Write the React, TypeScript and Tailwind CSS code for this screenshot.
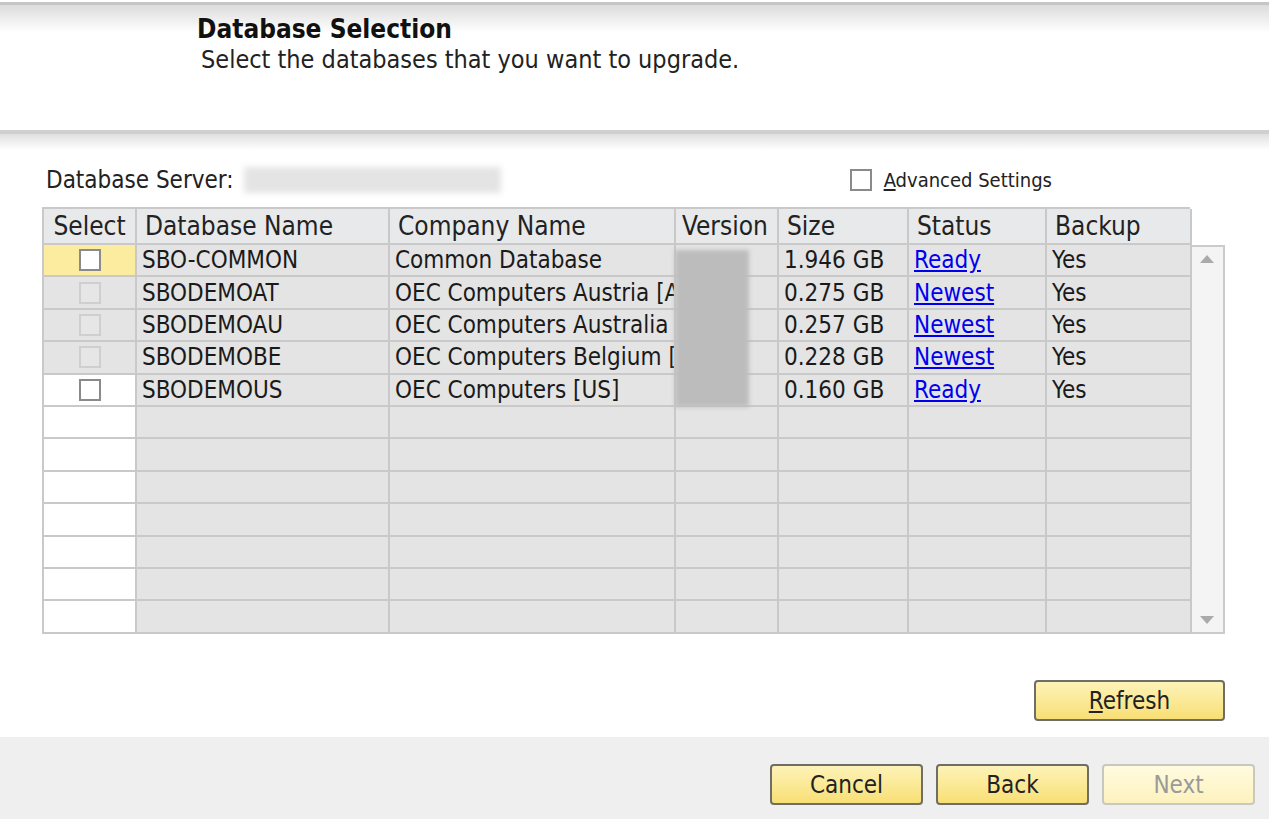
import React from 'react'

type Row = {
  name: string
  company: string
  size: string
  status: 'Ready' | 'Newest'
  backup: string
  selectBg: string
  disabled: boolean
}

const rows: Row[] = [
  { name: 'SBO-COMMON', company: 'Common Database', size: '1.946 GB', status: 'Ready', backup: 'Yes', selectBg: 'bg-[#fcec9f]', disabled: false },
  { name: 'SBODEMOAT', company: 'OEC Computers Austria [A', size: '0.275 GB', status: 'Newest', backup: 'Yes', selectBg: 'bg-[#e4e4e4]', disabled: true },
  { name: 'SBODEMOAU', company: 'OEC Computers Australia', size: '0.257 GB', status: 'Newest', backup: 'Yes', selectBg: 'bg-[#e4e4e4]', disabled: true },
  { name: 'SBODEMOBE', company: 'OEC Computers Belgium [', size: '0.228 GB', status: 'Newest', backup: 'Yes', selectBg: 'bg-[#e4e4e4]', disabled: true },
  { name: 'SBODEMOUS', company: 'OEC Computers [US]', size: '0.160 GB', status: 'Ready', backup: 'Yes', selectBg: 'bg-white', disabled: false },
]

const cols = 'grid grid-cols-[93px_253px_286px_103px_130px_138px_145px]'
const cell = 'border-r-2 border-b-2 border-[#c9c9c9] overflow-hidden whitespace-nowrap px-[5px] flex items-center'

const Check = ({ disabled }: { disabled?: boolean }) => (
  <div
    className={`w-[22px] h-[22px] border-2 ${disabled ? 'border-[#cfcfcf] bg-[#e6e6e6]' : 'border-[#8a8a8a] bg-white'}`}
  />
)

const YellowButton = ({ label, underline, disabled, className }: { label: string; underline?: number; disabled?: boolean; className?: string }) => (
  <button
    type="button"
    className={`h-[41px] w-[153px] rounded-[4px] border-2 text-[24px] leading-none ${
      disabled
        ? 'border-[#c8c8c0] bg-[linear-gradient(#fffbe0,#fdf2bd)] text-[#9a9a9a]'
        : 'border-[#6e6e66] bg-[linear-gradient(#fdf3b8,#f8df75)] text-[#222]'
    } ${className ?? ''}`}
  >
    {underline === undefined ? (
      label
    ) : (
      <>
        <span className="underline underline-offset-2">{label.slice(0, underline + 1)}</span>
        {label.slice(underline + 1)}
      </>
    )}
  </button>
)

const App: React.FC = () => {
  return (
    <div className="w-[1269px] h-[819px] bg-white overflow-hidden flex flex-col font-['DejaVu_Sans_Condensed','DejaVu_Sans',sans-serif] text-[#1a1a1a]">
      {/* header */}
      <div className="h-[2px]" />
      <div className="h-[3px] bg-[#c6c6c6]" />
      <div className="h-[125px] bg-[linear-gradient(#dcdcdc,#ffffff_22%)] pl-[197px] pt-[9px]">
        <div className="text-[26px] font-bold leading-[30px] text-[#111]">Database Selection</div>
        <div className="text-[25px] leading-[32px] pl-[4px] text-[#222]">Select the databases that you want to upgrade.</div>
      </div>
      <div className="h-[4px] bg-[#cfcfcf]" />
      <div className="h-[16px] bg-[linear-gradient(#e0e0e0,#ffffff)]" />

      {/* server row */}
      <div className="mt-[15px] h-[30px] flex items-center pl-[46px] pr-[217px]">
        <span className="text-[24px] text-[#222]">Database Server:</span>
        <div className="ml-[10px] w-[257px] h-[26px] bg-[#e4e4e4] blur-[3px]" />
        <div className="ml-auto flex items-center gap-[12px]">
          <div className="w-[22px] h-[22px] border-2 border-[#8a8a8a] bg-white" />
          <span className="text-[20px] text-[#222]">
            <span className="underline underline-offset-2">A</span>dvanced Settings
          </span>
        </div>
      </div>

      {/* table */}
      <div className="mt-[12px] ml-[42px] flex flex-col">
        <div className={`${cols} h-[38px] w-[1148px] bg-[#e7e9eb] border-t-2 border-l-2 border-[#c9c9c9] text-[26px] text-[#222]`}>
          {['Select', 'Database Name', 'Company Name', 'Version', 'Size', 'Status', 'Backup'].map((h, i) => (
            <div key={h} className={`${cell} ${i === 0 ? 'justify-center px-0' : i === 3 ? 'px-[6px]' : 'px-[8px]'}`}>
              {h}
            </div>
          ))}
        </div>
        <div className="flex">
          <div className="w-[1148px] border-l-2 border-[#c9c9c9] text-[24px] relative">
            {Array.from({ length: 12 }).map((_, r) => {
              const row = rows[r]
              return (
                <div key={r} className={`${cols} h-[32.4px]`}>
                  <div className={`${cell} justify-center ${row ? row.selectBg : 'bg-white'}`}>
                    {row && <Check disabled={row.disabled} />}
                  </div>
                  <div className={`${cell} bg-[#e4e4e4]`}>{row?.name}</div>
                  <div className={`${cell} bg-[#e4e4e4]`}>{row?.company}</div>
                  <div className={`${cell} bg-[#e4e4e4]`} />
                  <div className={`${cell} bg-[#e4e4e4]`}>{row?.size}</div>
                  <div className={`${cell} bg-[#e4e4e4]`}>
                    {row && <span className="text-[#0000ee] underline underline-offset-2">{row.status}</span>}
                  </div>
                  <div className={`${cell} bg-[#e4e4e4]`}>{row?.backup}</div>
                </div>
              )
            })}
            {/* blurred version values */}
            <div className="absolute left-[631px] top-[5px] w-[74px] h-[157px] bg-[#bcbcbc] blur-[2px]" />
          </div>
          <div className="w-[35px] h-[389px] border-2 border-l-0 border-[#cbcbcb] bg-[#f4f4f4] flex flex-col justify-between items-center py-[8px]">
            <svg width="14" height="8" viewBox="0 0 14 8"><path d="M7 0L14 8H0Z" fill="#aaaaaa" /></svg>
            <svg width="14" height="8" viewBox="0 0 14 8"><path d="M0 0H14L7 8Z" fill="#aaaaaa" /></svg>
          </div>
        </div>
      </div>

      <div className="mt-[46px] flex justify-end pr-[44px]">
        <YellowButton label="Refresh" underline={0} className="w-[191px] h-[41px]" />
      </div>

      <div className="mt-[16px] flex-1 bg-[#efefef] flex justify-end items-start gap-[13px] pr-[14px] pt-[27px]">
        <YellowButton label="Cancel" />
        <YellowButton label="Back" />
        <YellowButton label="Next" disabled />
      </div>
    </div>
  )
}

export default App
